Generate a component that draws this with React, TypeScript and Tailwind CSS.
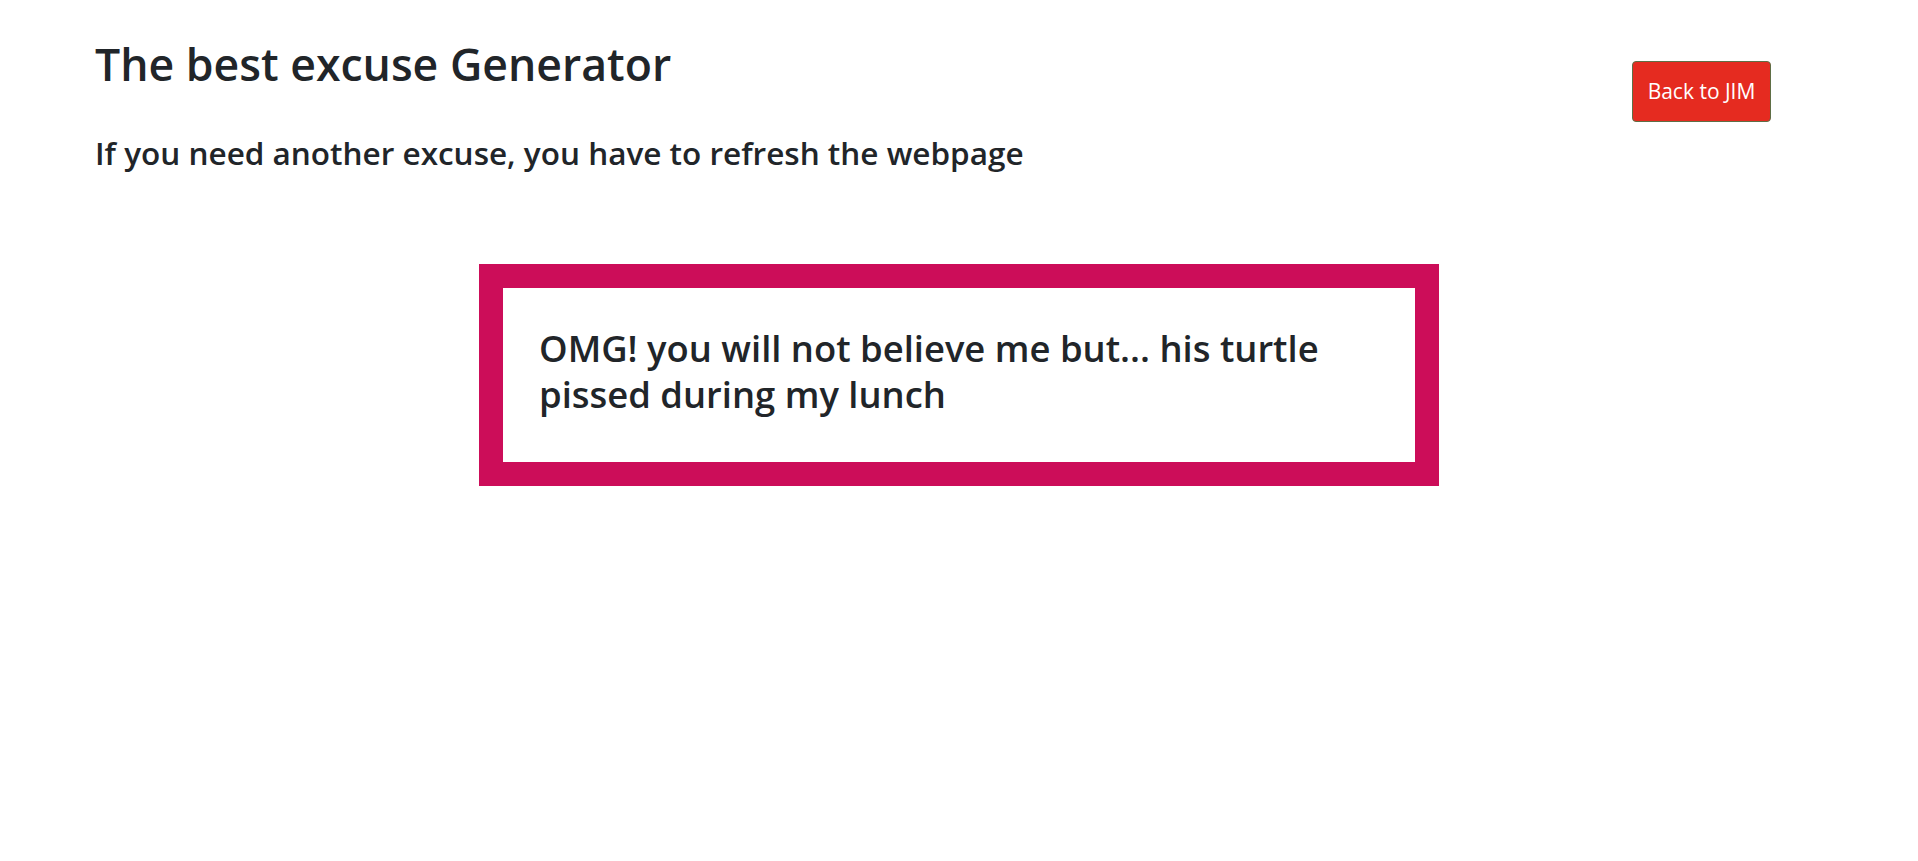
import React from 'react';

const excuse = 'OMG! you will not believe me but... his turtle pissed during my lunch';

const App: React.FC = () => {
  return (
    <div className="min-h-screen bg-white text-[#212529]" style={{ fontFamily: '"Open Sans", "Noto Sans", sans-serif' }}>
      <header className="flex items-start justify-between pl-[95px] pr-[147px] pt-[37px]">
        <div>
          <h1 className="text-[44.6px] font-semibold leading-[1.2]">The best excuse Generator</h1>
          <h3 className="mt-[43px] text-[31.5px] font-semibold leading-[1.2]">
            If you need another excuse, you have to refresh the webpage
          </h3>
        </div>
        <button className="mt-[24px] h-[61px] w-[139px] rounded-[4px] border border-[#5f6e45] bg-[#e52b20] text-[21px] text-white">
          Back to JIM
        </button>
      </header>

      <div className="mt-[93px] flex justify-center">
        <div className="w-[960px] border-[24px] border-[#cc0d59] bg-white px-[36px] pt-[37px] pb-[45px]">
          <h2 className="text-[36.4px] font-semibold leading-[46px]">{excuse}</h2>
        </div>
      </div>
    </div>
  );
};

export default App;
